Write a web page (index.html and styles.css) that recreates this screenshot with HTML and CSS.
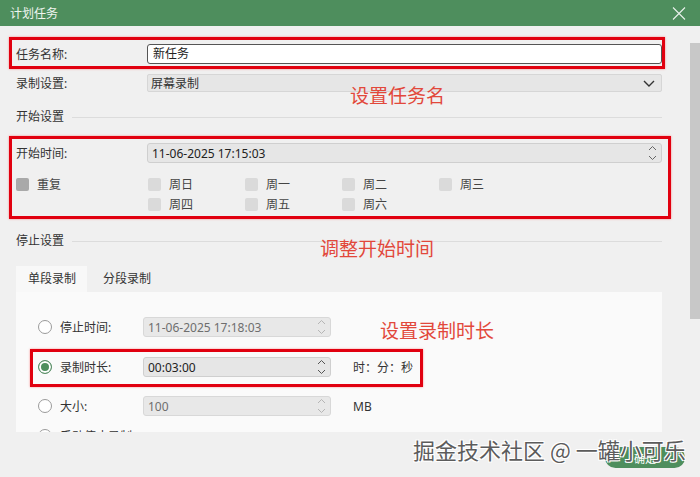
FILE: index.html
```html
<!DOCTYPE html>
<html lang="zh-CN">
<head>
    <meta charset="UTF-8">
    <meta name="viewport" content="width=device-width, initial-scale=1.0">
    <title>计划任务</title>
    <link rel="stylesheet" href="styles.css">
</head>
<body>

    <!-- Title bar -->
    <div class="titlebar">
        <span class="title">计划任务</span>
        <svg class="close" width="14" height="13" viewBox="0 0 14 13">
            <path d="M1 0.5 L13 12.5 M13 0.5 L1 12.5" stroke="#e9f1eb" stroke-width="1.1" fill="none"/>
        </svg>
    </div>

    <div class="main">
        <!-- Task name -->
        <div class="mark name-box">
            <div class="row">
                <span class="label">任务名称:</span>
                <div class="text-input">新任务</div>
            </div>
        </div>

        <div class="row select-row">
            <span class="label">录制设置:</span>
            <div class="select">
                <span>屏幕录制</span>
                <svg width="12" height="7" viewBox="0 0 12 7">
                    <path d="M1 1 L6 6 L11 1" stroke="#333" stroke-width="1.4" fill="none"/>
                </svg>
            </div>
        </div>

        <!-- Start settings -->
        <div class="section-title">开始设置</div>

        <div class="mark start-box">
            <div class="row">
                <span class="label">开始时间:</span>
                <div class="spin wide">
                    <span>11-06-2025 17:15:03</span>
                    <svg class="arrows" width="9" height="16" viewBox="0 0 9 16">
                        <path d="M1 5 L4.5 1.5 L8 5 M1 11 L4.5 14.5 L8 11" stroke="#666" stroke-width="1" fill="none"/>
                    </svg>
                </div>
            </div>
            <div class="repeat">
                <div class="check-item repeat-main"><span class="box dark"></span>重复</div>
                <div class="days">
                    <div class="check-item"><span class="box"></span>周日</div>
                    <div class="check-item"><span class="box"></span>周一</div>
                    <div class="check-item"><span class="box"></span>周二</div>
                    <div class="check-item"><span class="box"></span>周三</div>
                    <div class="check-item"><span class="box"></span>周四</div>
                    <div class="check-item"><span class="box"></span>周五</div>
                    <div class="check-item"><span class="box"></span>周六</div>
                </div>
            </div>
        </div>

        <!-- Stop settings -->
        <div class="section-title stop-title">停止设置</div>

        <div class="tabs">
            <div class="tab active">单段录制</div>
            <div class="tab">分段录制</div>
        </div>

        <div class="panel">
            <div class="option first">
                <span class="radio"></span>
                <span class="opt-label">停止时间:</span>
                <div class="spin disabled">
                    <span>11-06-2025 17:18:03</span>
                    <svg class="arrows" width="9" height="16" viewBox="0 0 9 16">
                        <path d="M1 5 L4.5 1.5 L8 5 M1 11 L4.5 14.5 L8 11" stroke="#b5b5b5" stroke-width="1" fill="none"/>
                    </svg>
                </div>
            </div>

            <div class="mark duration-box">
                <div class="option">
                    <span class="radio checked"></span>
                    <span class="opt-label">录制时长:</span>
                    <div class="spin">
                        <span>00:03:00</span>
                        <svg class="arrows" width="9" height="16" viewBox="0 0 9 16">
                            <path d="M1 5 L4.5 1.5 L8 5 M1 11 L4.5 14.5 L8 11" stroke="#555" stroke-width="1" fill="none"/>
                        </svg>
                    </div>
                    <span class="unit">时：分：秒</span>
                </div>
            </div>

            <div class="option after-box">
                <span class="radio"></span>
                <span class="opt-label">大小:</span>
                <div class="spin disabled">
                    <span>100</span>
                    <svg class="arrows" width="9" height="16" viewBox="0 0 9 16">
                        <path d="M1 5 L4.5 1.5 L8 5 M1 11 L4.5 14.5 L8 11" stroke="#b5b5b5" stroke-width="1" fill="none"/>
                    </svg>
                </div>
                <span class="unit">MB</span>
            </div>

            <div class="option last">
                <span class="radio"></span>
                <span class="opt-label">手动停止录制</span>
            </div>
        </div>

        <div class="footer">
            <button class="ok">确定</button>
        </div>

        <!-- annotations over the screenshot -->
        <div class="note note-name">设置任务名</div>
        <div class="note note-start">调整开始时间</div>
        <div class="note note-duration">设置录制时长</div>
        <div class="watermark">掘金技术社区 @ 一罐小可乐</div>
        <div class="scrollbar"></div>
    </div>

</body>
</html>
```

FILE: styles.css
```css
/* General */
body {
    margin: 0;
    width: 700px;
    height: 477px;
    overflow: hidden;
    background-color: #f0f0f0;
    color: #333;
    font-family: "Noto Sans", "Noto Sans CJK SC", sans-serif;
    font-size: 12px;
}

.titlebar {
    height: 26px;
    background-color: #4e8e5d;
    display: flex;
    align-items: center;
    justify-content: space-between;
    padding: 0 14px 0 10px;
}

.title {
    color: #eef4ef;
    font-size: 12px;
}

.main {
    position: relative;
    display: flow-root;
    height: 451px;
}

.row {
    display: flex;
    align-items: center;
}

.label {
    width: 131px;
    flex: none;
}

/* red frames */
.mark {
    border: 3px solid #e1000f;
    box-shadow: 0 0 2px rgba(255, 40, 40, 0.5);
}

.name-box {
    margin: 11px 35px 0 9px;
    padding: 4px 0 2px 4px;
}

.text-input {
    flex: 1;
    height: 18px;
    line-height: 18px;
    background-color: #fff;
    border: 1px solid #555;
    border-radius: 3px;
    padding-left: 5px;
    color: #222;
}

.select-row {
    margin: 5px 38px 0 16px;
}

.select {
    flex: 1;
    height: 16px;
    display: flex;
    align-items: center;
    justify-content: space-between;
    background-color: #e6e6e6;
    border: 1px solid #d6d6d6;
    border-radius: 2px;
    padding: 0 6px 0 3px;
}

.section-title {
    margin: 17px 38px 0 16px;
    height: 16px;
    line-height: 16px;
    display: flex;
    align-items: center;
}

.section-title::after {
    content: "";
    flex: 1;
    border-top: 1px solid #dcdcdc;
    margin-left: 8px;
}

.stop-title {
    margin-top: 14px;
}

.start-box {
    margin: 11px 29px 0 9px;
    padding: 4px 6px 2px 4px;
}

.spin {
    width: 178px;
    height: 18px;
    display: flex;
    align-items: center;
    justify-content: space-between;
    background-color: #e6e6e6;
    border: 1px solid #cfcfcf;
    border-radius: 3px;
    padding: 0 4px 0 4px;
    color: #222;
}

.spin.wide {
    flex: 1;
    width: auto;
}

.spin.disabled {
    color: #6e6e6e;
    background-color: #e8e8e8;
    border-color: #d8d8d8;
}

.repeat {
    display: flex;
    margin-top: 11px;
}

.repeat-main {
    width: 132px;
    align-self: flex-start;
}

.days {
    display: grid;
    grid-template-columns: repeat(4, 97px);
}

.check-item {
    height: 20px;
    display: flex;
    align-items: center;
    color: #444;
}

.box {
    width: 13px;
    height: 13px;
    border-radius: 2px;
    background-color: #dadada;
    margin-right: 8px;
}

.box.dark {
    background-color: #a9a9a9;
}

/* tabs */
.tabs {
    display: flex;
    margin: 17px 0 0 16px;
}

.tab {
    height: 26px;
    line-height: 26px;
    padding: 0 16px;
}

.tab.active {
    background-color: #f8f8f8;
    padding: 0 11px 0 12px;
}

.panel {
    margin: 0 38px 0 16px;
    height: 140px;
    overflow: hidden;
    background-color: #fafafa;
}

.option {
    height: 20px;
    display: flex;
    align-items: center;
    padding-left: 22px;
}

.option.first {
    margin-top: 25px;
}

.option.after-box {
    margin-top: 9px;
}

.option.last {
    margin-top: 10px;
}

.duration-box {
    margin: 12px 0 0 14px;
    width: 387px;
    padding: 5px 0 7px 0;
}

.duration-box .option {
    padding-left: 5px;
}

.radio {
    width: 12px;
    height: 12px;
    border: 1px solid #9a9a9a;
    border-radius: 50%;
    background-color: #fff;
    margin-right: 8px;
    flex: none;
}

.radio.checked {
    border-color: #5a8f68;
    background-color: #4e8e5d;
    box-shadow: inset 0 0 0 2px #fff;
}

.opt-label {
    width: 83px;
}

.unit {
    margin-left: 22px;
}

/* footer */
.footer {
    height: 45px;
    display: flex;
    justify-content: flex-end;
    align-items: flex-start;
    padding: 15px 15px 0 0;
    box-sizing: border-box;
}

.ok {
    width: 80px;
    height: 21px;
    border: none;
    border-radius: 11px;
    background-color: #4e8e5d;
    color: #fff;
    font-family: "Noto Sans CJK SC", sans-serif;
    font-size: 11px;
    padding: 0;
}

/* overlays */
.note {
    position: absolute;
    color: #e2483b;
    font-family: "Noto Sans CJK SC", sans-serif;
    font-size: 19px;
    line-height: 20px;
}

.note-name {
    left: 350px;
    top: 59px;
}

.note-start {
    left: 320px;
    top: 212px;
}

.note-duration {
    left: 380px;
    top: 294px;
}

.watermark {
    position: absolute;
    left: 413px;
    top: 410px;
    font-family: "Noto Sans CJK SC", sans-serif;
    font-size: 22px;
    line-height: 26px;
    color: #5c5c5c;
    text-shadow: 1px 1px 0 #fff, -1px -1px 0 #fff, 1px -1px 0 #fff, -1px 1px 0 #fff;
}

.scrollbar {
    position: absolute;
    right: 0;
    top: 17px;
    width: 10px;
    height: 276px;
    background-color: #c8c8c8;
}
```
